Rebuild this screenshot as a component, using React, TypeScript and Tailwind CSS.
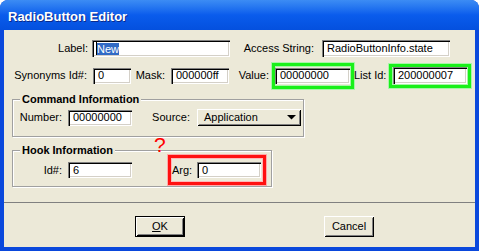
import React from "react";

const sunken =
  "bg-white shadow-[inset_1px_1px_0_#808080,inset_2px_2px_0_#000,inset_-1px_-1px_0_#fff,inset_-2px_-2px_0_#d4d0c8] flex items-center pl-[5px] whitespace-nowrap overflow-hidden";
const raised =
  "bg-[#ece9d8] shadow-[inset_1px_1px_0_#fff,inset_-1px_-1px_0_#000,inset_2px_2px_0_#ece9d8,inset_-2px_-2px_0_#808080]";

export default function App() {
  return (
    <div className="w-[479px] h-[251px] bg-white font-['Liberation_Sans',Arial,sans-serif] text-[11px] leading-[13px] text-black whitespace-nowrap">
      <div className="w-full h-full rounded-t-[8px] bg-[#0a48dc] flex flex-col overflow-hidden">
        <div className="h-[30px] shrink-0 bg-gradient-to-b from-[#3c8cf4] via-[#0a5cec] to-[#0450de] flex items-center pl-[8px] pt-[3px]">
          <span className="text-white font-bold text-[13px] leading-[16px] [text-shadow:1px_1px_0_#0b2a8a]">
            RadioButton Editor
          </span>
        </div>
        <div className="flex-1 mx-[4px] mb-[4px] bg-[#ece9d8] flex flex-col">
          {/* Row 1 */}
          <div className="flex items-center mt-[10px] h-[17px]">
            <div className="w-[84px] shrink-0 text-right">Label:</div>
            <div className={`ml-[4px] w-[138px] h-[17px] ${sunken} !pl-[4px]`}>
              <div className="w-[1px] h-[13px] bg-black" />
              <span className="bg-[#316ac5] text-white leading-[12px] h-[12px]">New</span>
            </div>
            <div className="w-[84px] shrink-0 text-right">Access String:</div>
            <div className={`ml-[8px] w-[128px] h-[17px] ${sunken}`}>RadioButtonInfo.state</div>
          </div>

          {/* Row 2 */}
          <div className="flex items-center mt-[5px] h-[27px]">
            <div className="w-[83px] shrink-0 text-right">Synonyms Id#:</div>
            <div className={`ml-[6px] w-[38px] h-[16px] ${sunken}`}>0</div>
            <div className="w-[34px] shrink-0 text-right">Mask:</div>
            <div className={`ml-[6px] w-[58px] h-[16px] ${sunken}`}>000000ff</div>
            <div className="w-[40px] shrink-0 text-right">Value:</div>
            <div className="ml-[3px] w-[82px] h-[26px] shrink-0 border-[3px] border-[#1af01a] shadow-[0_0_0_1px_#a8f5a8,inset_0_0_0_1px_#a8f5a8] flex items-center">
              <div className={`w-[75px] h-[16px] ${sunken}`}>00000000</div>
            </div>
            <div className="w-[31px] shrink-0 text-right">List Id:</div>
            <div className="ml-[4px] w-[82px] h-[24px] shrink-0 border-[3px] border-[#1af01a] shadow-[0_0_0_1px_#a8f5a8,inset_0_0_0_1px_#a8f5a8] flex items-center pl-[1px]">
              <div className={`w-[74px] h-[17px] ${sunken}`}>200000007</div>
            </div>
          </div>

          {/* Command Information */}
          <fieldset className="ml-[8px] mt-[4px] w-[292px] border border-[#a0a0a0] shadow-[1px_1px_0_#fff,inset_1px_1px_0_#fff] pb-[10px]">
            <legend className="ml-[7px] px-[2px] font-bold leading-[13px] bg-[#ece9d8]">
              Command Information
            </legend>
            <div className="flex items-center mt-[3px] h-[17px]">
              <div className="w-[49px] shrink-0 text-right">Number:</div>
              <div className={`ml-[6px] w-[64px] h-[16px] ${sunken}`}>00000000</div>
              <div className="w-[58px] shrink-0 text-right">Source:</div>
              <div className={`ml-[7px] w-[104px] h-[17px] ${raised} flex items-center pl-[7px]`}>
                <span className="flex-1">Application</span>
                <svg width="9" height="5" viewBox="0 0 9 5" className="mr-[5px]">
                  <polygon points="0,0 9,0 4.5,4.5" fill="#000" />
                </svg>
              </div>
            </div>
          </fieldset>

          {/* Hook Information */}
          <fieldset className="ml-[8px] mt-[7px] w-[260px] border border-[#a0a0a0] shadow-[1px_1px_0_#fff,inset_1px_1px_0_#fff] pb-[1px]">
            <legend className="ml-[7px] px-[2px] font-bold leading-[13px] bg-[#ece9d8]">
              Hook Information
            </legend>
            <div className="relative flex items-center -mt-[2px] h-[30px]">
              <div className="w-[49px] shrink-0 text-right">Id#:</div>
              <div className={`ml-[6px] w-[64px] h-[16px] ${sunken}`}>6</div>
              <div className="ml-[36px] w-[98px] h-[30px] shrink-0 border-[3px] border-[#ff1010] shadow-[0_0_0_1px_#ffa8a8,inset_0_0_0_1px_#ffb8b8] flex items-center">
                <span className="w-[26px] pl-[1px]">Arg:</span>
                <div className={`w-[64px] h-[16px] ${sunken}`}>0</div>
              </div>
              <span className="absolute left-[141px] top-[-20px] text-[21px] leading-[20px] text-[#ff0000] z-10">
                ?
              </span>
            </div>
          </fieldset>

          <div className="mt-[15px] h-[1px] bg-[#808080]" />

          <div className="flex mt-[13px]">
            <div className={`ml-[131px] w-[50px] h-[21px] border border-black ${raised} flex items-center justify-center`}>
              <span>
                <span className="underline">O</span>K
              </span>
            </div>
            <div className={`ml-[139px] w-[50px] h-[21px] ${raised} flex items-center justify-center`}>
              Cancel
            </div>
          </div>
        </div>
      </div>
    </div>
  );
}
